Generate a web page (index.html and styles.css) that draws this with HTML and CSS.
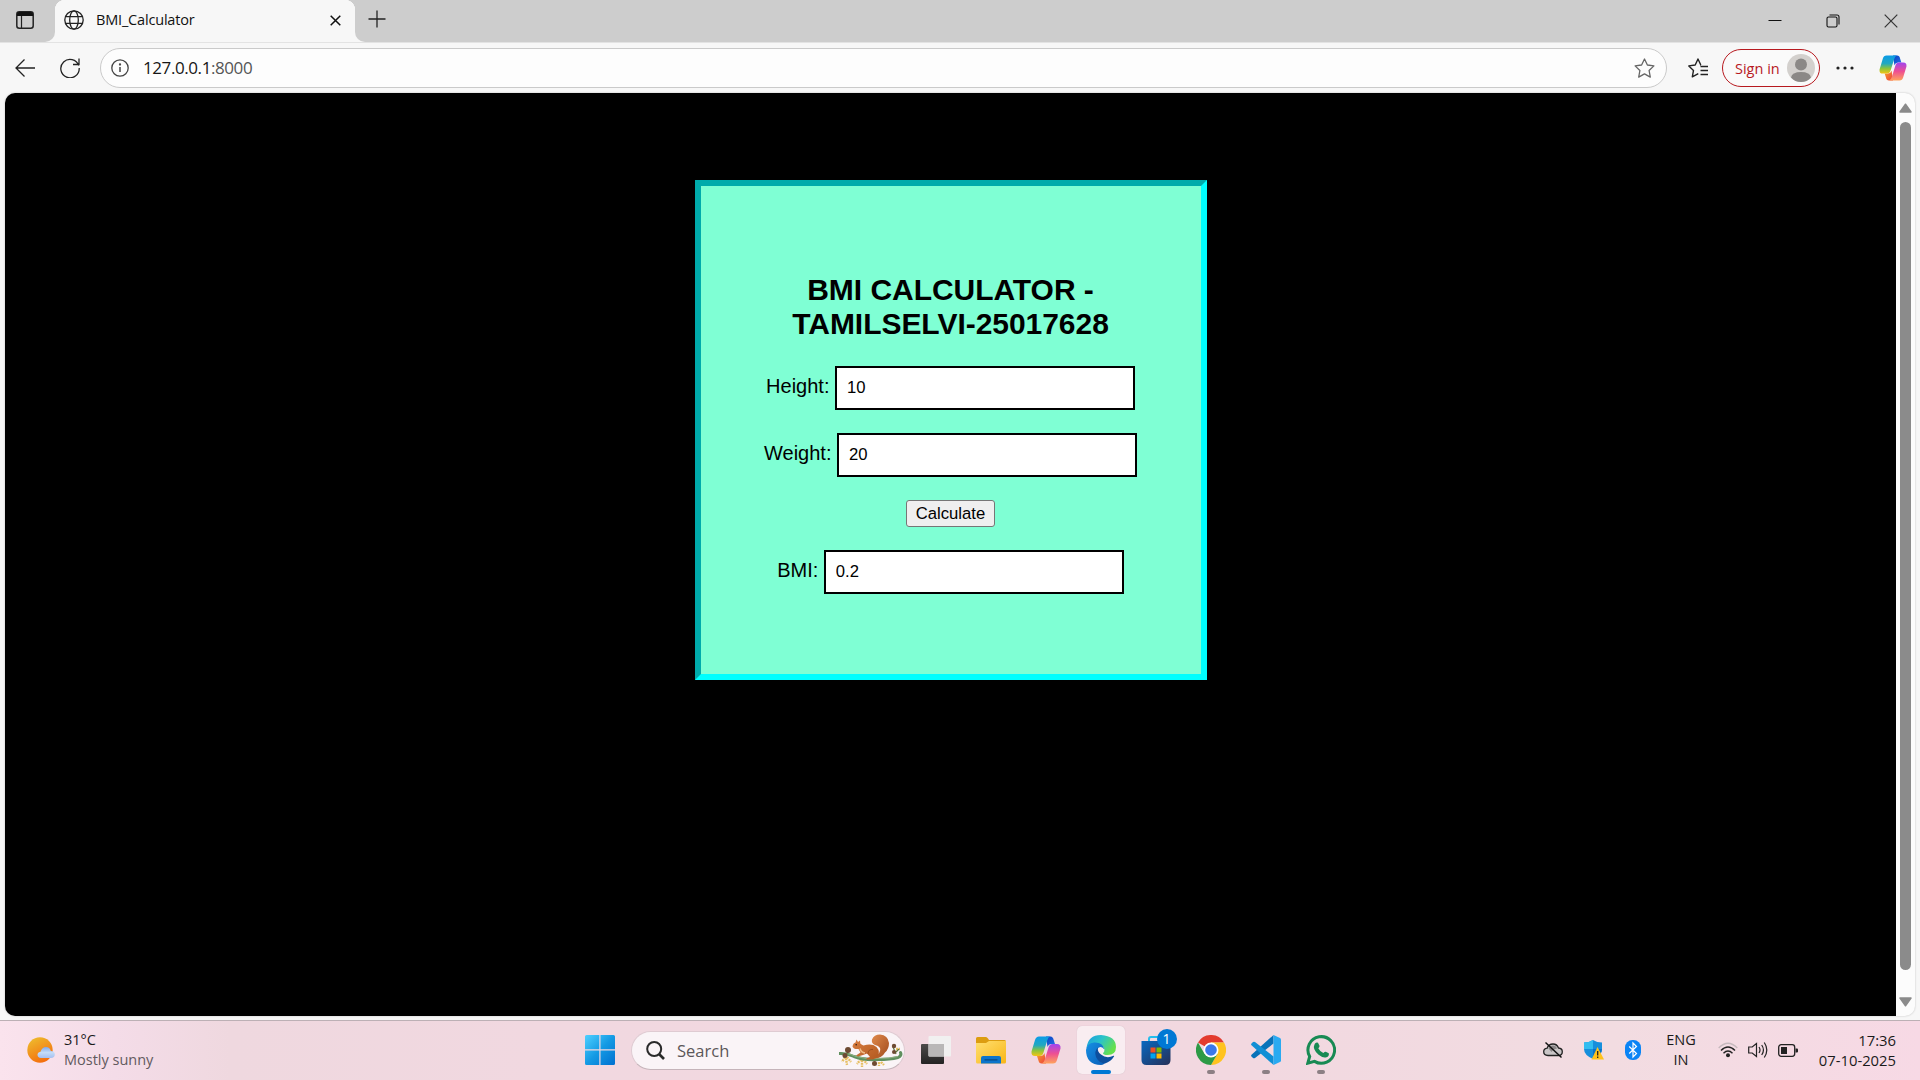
FILE: index.html
```html
<!DOCTYPE html>
<html lang="en">
<head>
<meta charset="utf-8">
<title>BMI_Calculator</title>
<link rel="stylesheet" href="styles.css">
</head>
<body>
<svg class="defs" width="0" height="0" aria-hidden="true">
  <defs>
    <linearGradient id="cpBlue" x1="0" y1="0" x2="0" y2="1"><stop offset="0" stop-color="#0a9be8"/><stop offset=".45" stop-color="#22a8c0"/><stop offset=".72" stop-color="#8cc43c"/><stop offset="1" stop-color="#f4c414"/></linearGradient>
    <linearGradient id="cpPink" x1="0" y1="0" x2="0" y2="1"><stop offset="0" stop-color="#a044f0"/><stop offset=".5" stop-color="#ee4f92"/><stop offset="1" stop-color="#ffa35c"/></linearGradient>
    <linearGradient id="cpNavy" x1="0" y1="0" x2="1" y2="1"><stop offset="0" stop-color="#0a3fc0"/><stop offset="1" stop-color="#2374ea"/></linearGradient>
    <linearGradient id="cpRed" x1="0" y1="0" x2="1" y2="1"><stop offset="0" stop-color="#f8a02c"/><stop offset="1" stop-color="#ec3f3c"/></linearGradient>
    <linearGradient id="win" x1="0" y1="0" x2="1" y2="1"><stop offset="0" stop-color="#4fd0ff"/><stop offset=".5" stop-color="#149ae4"/><stop offset="1" stop-color="#0070d0"/></linearGradient>
    <linearGradient id="sun" x1=".2" y1="0" x2=".7" y2="1"><stop offset="0" stop-color="#eebb2d"/><stop offset="1" stop-color="#f46a0c"/></linearGradient>
    <linearGradient id="cloud" x1="0" y1="0" x2="0" y2="1"><stop offset="0" stop-color="#7fa8ea"/><stop offset=".5" stop-color="#c3dcf8"/><stop offset="1" stop-color="#a5bff0"/></linearGradient>
    <linearGradient id="folder" x1="0" y1="0" x2="1" y2="1"><stop offset="0" stop-color="#ffdf70"/><stop offset="1" stop-color="#f8b617"/></linearGradient>
    <linearGradient id="edgeTop" x1="0" y1="0" x2="1" y2=".5"><stop offset="0" stop-color="#1b9be0"/><stop offset=".5" stop-color="#2bc3c9"/><stop offset="1" stop-color="#66e04c"/></linearGradient>
    <linearGradient id="edgeLow" x1="0" y1="0" x2="1" y2="1"><stop offset="0" stop-color="#1690e4"/><stop offset="1" stop-color="#0a5eb8"/></linearGradient>
    <linearGradient id="store" x1="0" y1="0" x2="1" y2="1"><stop offset="0" stop-color="#0868c0"/><stop offset="1" stop-color="#273058"/></linearGradient>
    <linearGradient id="dark" x1="0" y1="0" x2="0" y2="1"><stop offset="0" stop-color="#4c4a49"/><stop offset="1" stop-color="#242323"/></linearGradient>
    <linearGradient id="tail" x1="0" y1="0" x2="1" y2="1"><stop offset="0" stop-color="#e08a4c"/><stop offset="1" stop-color="#a04a1c"/></linearGradient>
    <linearGradient id="fur" x1="0" y1="0" x2="1" y2="1"><stop offset="0" stop-color="#d87c40"/><stop offset="1" stop-color="#b35a20"/></linearGradient>
    <symbol id="copilot" viewBox="0 0 30 28">
      <path d="M15 .5h4.500Q22 .5 22.700 4L24 8h-3.500q-3 0-4 3Z" fill="url(#cpNavy)"/>
      <path d="M15 27.500h-4.500Q8 27.500 7.300 24L6 20h3.500q3 0 4-3Z" fill="url(#cpRed)"/>
      <path d="M8 .5h11.200q-2 .5-3 4L12.500 16.500q-1 3.500-4 3.500H4Q0 20 .5 15.500L4 4Q5 .5 8 .500Z" fill="url(#cpBlue)"/>
      <path d="M22 27.500H10.800q2-.5 3-4L17.500 11.500q1-3.500 4-3.500H26q4 0 3.500 4.500L26 24q-1 3.500-4 3.500Z" fill="url(#cpPink)"/>
    </symbol>
  </defs>
</svg>

<div class="screen">
  <header class="tabstrip">
    <div class="tab-actions">
      <svg width="18" height="18" viewBox="0 0 18 18"><rect x=".8" y=".8" width="16.400" height="16.400" rx="2.500" fill="none" stroke="#222" stroke-width="1.500"/><path d="M1 5V3q0-2 2-2h12q2 0 2 2v2Z" fill="#111"/><path d="M5.500 5v12" stroke="#222" stroke-width="1.200"/></svg>
    </div>
    <div class="tab">
      <svg class="globe" width="20" height="20" viewBox="0 0 20 20" fill="none" stroke="#222" stroke-width="1.300"><circle cx="10" cy="10" r="9.200"/><ellipse cx="10" cy="10" rx="4.300" ry="9.200"/><path d="M1.700 6.700h16.600M1.700 13.300h16.600"/></svg>
      <span class="tab-title">BMI_Calculator</span>
      <svg class="tab-close" width="11" height="11" viewBox="0 0 11 11" stroke="#111" stroke-width="1.500"><path d="M.7.700l9.600 9.600M10.300.700L.7 10.300"/></svg>
    </div>
    <svg class="new-tab" width="18" height="18" viewBox="0 0 18 18" stroke="#222" stroke-width="1.300"><path d="M9 .500v17M.500 9h17"/></svg>
    <div class="window-buttons">
      <svg width="14" height="14" viewBox="0 0 14 14" stroke="#111"><path d="M.500 6.500h13"/></svg>
      <svg width="14" height="14" viewBox="0 0 14 14" fill="none" stroke="#111" stroke-width="1.100"><rect x="1" y="3" width="10" height="10" rx="1.500"/><path d="M3.500 1H11q2 0 2 2v7.500"/></svg>
      <svg width="14" height="14" viewBox="0 0 14 14" stroke="#333" stroke-width="1.200"><path d="M.700.700l12.600 12.600M13.300.700L.700 13.300"/></svg>
    </div>
  </header>

  <nav class="toolbar">
    <svg class="back" width="20" height="18" viewBox="0 0 20 18" fill="none" stroke="#222" stroke-width="1.300"><path d="M20 9H1M9.500.500L1 9l8.500 8.500"/></svg>
    <svg class="reload" width="20" height="20" viewBox="0 0 20 20" fill="none" stroke="#222" stroke-width="1.300"><path d="M18.700 7.500A9.200 9.200 0 1 0 19.200 10M19 .500v6h-6"/></svg>
    <div class="address">
      <svg class="info" width="18" height="18" viewBox="0 0 18 18" fill="none" stroke="#444" stroke-width="1.300"><circle cx="9" cy="9" r="8.200"/><path d="M9 8v5" stroke-width="1.500"/><circle cx="9" cy="5.500" r=".5"/></svg>
      <span class="url"><b>127.0.0.1</b>:8000</span>
      <svg class="star" width="21" height="20" viewBox="0 0 21 20" fill="none" stroke="#666" stroke-width="1.300" stroke-linejoin="round"><path d="M10.500 1l2.900 6 6.500.900-4.800 4.600 1.200 6.600-5.800-3.200-5.800 3.200 1.200-6.600L1.100 7.900 7.600 7Z"/></svg>
    </div>
    <svg class="favorites" width="21" height="20" viewBox="0 0 21 20" fill="none" stroke="#222" stroke-width="1.400" stroke-linejoin="round"><path d="M13 7h-.2L10 1 7.200 7l-6.400.9 4.700 4.500-1.200 6.500 6-3.300M12.500 8.500H20M12.500 12.500H20M12.500 16.500H20"/></svg>
    <div class="signin"><span>Sign in</span>
      <svg width="28" height="28" viewBox="0 0 28 28"><circle cx="14" cy="14" r="14" fill="#d3d0cd"/><circle cx="14" cy="10.500" r="6" fill="#8b8886"/><path d="M4 23.500Q5 18 14 18t10 5.500Q20 28 14 28T4 23.500Z" fill="#8b8886"/></svg>
    </div>
    <svg class="more" width="18" height="4" viewBox="0 0 18 4" fill="#222"><circle cx="2" cy="2" r="1.600"/><circle cx="9" cy="2" r="1.600"/><circle cx="16" cy="2" r="1.600"/></svg>
    <svg class="copilot-button" width="28" height="26"><use href="#copilot"/></svg>
  </nav>

  <div class="viewport">
    <main class="page">
      <form class="card">
        <h1>BMI CALCULATOR -<br>TAMILSELVI-25017628</h1>
        <div class="field"><label for="height">Height:</label><input id="height" type="text" value="10"></div>
        <div class="field"><label for="weight">Weight:</label><input id="weight" type="text" value="20"></div>
        <button type="button">Calculate</button>
        <div class="field"><label for="bmi">BMI:</label><input id="bmi" type="text" value="0.2"></div>
      </form>
    </main>
    <div class="scrollbar">
      <svg width="13" height="10" viewBox="0 0 13 10"><path d="M6.500 1.200L12 9H1Z" fill="#8b8b8b" stroke="#8b8b8b" stroke-width="1.500" stroke-linejoin="round"/></svg>
      <div class="thumb"></div>
      <svg width="13" height="10" viewBox="0 0 13 10"><path d="M6.500 8.800L12 1H1Z" fill="#8b8b8b" stroke="#8b8b8b" stroke-width="1.500" stroke-linejoin="round"/></svg>
    </div>
  </div>

  <footer class="taskbar">
    <div class="weather">
      <svg width="28" height="26" viewBox="0 0 28 26"><circle cx="13" cy="13" r="12.700" fill="url(#sun)"/><path d="M14 21q-3.500-.3-3.500-3.200 0-2.500 3-3 1.500-4.800 5.500-4.800 3.800 0 4.800 4 4 .2 4 3.600 0 3.400-4 3.400Z" fill="url(#cloud)"/></svg>
      <div class="weather-text"><div>31°C</div><div class="dim">Mostly sunny</div></div>
    </div>
    <svg class="start" width="30" height="30" viewBox="0 0 30 30" fill="url(#win)"><path d="M1.500 0H14.300V14.300H0V1.500Q0 0 1.500 0ZM15.500 0h13Q30 0 30 1.500V14.300H15.500ZM0 15.500H14.300V30H1.500Q0 30 0 28.500ZM15.500 15.500H30v13q0 1.500-1.500 1.500h-13Z"/></svg>
    <div class="search">
      <svg class="lens" width="19" height="19" viewBox="0 0 19 19" fill="none" stroke="#2a2a2a" stroke-width="2"><circle cx="8.200" cy="8" r="7"/><path d="M13 13l5 5" stroke-width="2.600"/></svg>
      <span>Search</span>
      <svg class="squirrel" width="64" height="34" viewBox="0 0 64 34">
        <path d="M6 23l-3 5M7 24l1 7M8 23l4 5M22 25l-4 5M23 26l0 7M24 25l4 5M40 28l0 4M42 28l3 3M57 15l4 0" stroke="#e6bf63" stroke-width="2.400" stroke-dasharray="2 .8" fill="none"/>
        <path d="M0 19.500q8-.5 15 3 11 4 24 3 12 0 20-2 4-2 2.500-5" fill="none" stroke="#5f8f5e" stroke-width="3" stroke-linecap="round"/>
        <path d="M6 19.500q6 .5 11 3 10 3 22 2 12 0 20-2" fill="none" stroke="#9bb98c" stroke-width=".8"/>
        <path d="M7 22l2-5M57 20l-3-7M56 19l4-4" stroke="#5d783e" stroke-width="1.200" fill="none"/>
        <path d="M34 23Q43 19 41 14 39.500 11.500 36 11 32 9 33 5.500 35 .5 41 .5 49 1 50 9 50 15 46 18.500 43 24 36 24.500Z" fill="url(#tail)"/>
        <path d="M13.500 12.500Q14 9 16.500 8.500L17.500 5.500 19 8l2-1.500.3 3Q23 11 24.500 11.500 33 9 37.500 13q4.500 5 .5 10.500L34 25.500H27l1-1.500 3-1-3-3.500-4 1.500-5 1.500-2-1 4.500-3-2-3.500Q14.500 15.500 13.500 12.500Z" fill="url(#fur)"/>
        <path d="M21 14.500q1 4 5 4.500" stroke="#efba86" stroke-width="1.500" fill="none"/><circle cx="17.200" cy="10.700" r=".8" fill="#2f1b12"/>
        <path d="M29 20q0-5 5-4.500" stroke="#964719" stroke-width=".8" fill="none"/>
        <g fill="#6d4a32"><circle cx="9" cy="16" r="3"/><circle cx="6" cy="21.500" r="2.500"/><circle cx="35.500" cy="29.500" r="2.500"/><circle cx="55" cy="12" r="2.200"/><circle cx="55" cy="18" r="2"/></g>
      </svg>
    </div>
    <div class="apps">
      <div class="app"><svg width="30" height="30" viewBox="0 0 30 30"><rect x="0" y="9" width="23" height="20" rx="1" fill="url(#dark)"/><rect x="7.500" y="1" width="22.500" height="20.500" rx="1" fill="#f1f0f0"/><path d="M7.500 9H23v12.500H8.500q-1 0-1-1Z" fill="#b9b7b7"/></svg></div>
      <div class="app"><svg width="30" height="30" viewBox="0 0 30 30"><path d="M0 9V3.500Q0 2 1.500 2H10q1 0 2 1.500L13 5h15.500Q30 5 30 6.500V12H0Z" fill="#dc9d10"/><path d="M0 8h10l3-2h17v21q0 1.500-1.500 1.500h-27Q0 28.500 0 27Z" fill="url(#folder)"/><path d="M5 28.500V23q0-2 2-2h16q2 0 2 2v5.500Z" fill="#0d75cb"/><path d="M9 24.800h12" stroke="#094a83" stroke-width="1.300" stroke-linecap="round"/></svg></div>
      <div class="app"><svg width="30" height="28"><use href="#copilot"/></svg></div>
      <div class="app active"><svg width="30" height="30" viewBox="0 0 30 30"><path d="M.500 13Q2 0 15 0q15 1 15 12 0 8-8.500 8-4.500 0-4.500-2 1.500-1 1.500-3.500Q17 8.500 10 8.500 3 8.500.500 13Z" fill="url(#edgeTop)"/><path d="M0 15Q1 8 8 7.500q9-.5 10.500 7Q13.500 9.500 11 15q-1 11 8 13.500Q16 30 15 30 0 29.500 0 15Z" fill="url(#edgeLow)"/><path d="M12 12.500Q8 16 10 22q3 6 9 6.500 6-2 9-7 .500-1-.500-.7-7 3.200-12.500-1.300-4-3-3-7Z" fill="#0d4f9e"/></svg><i class="mark"></i></div>
      <div class="app"><svg width="30" height="30" viewBox="0 0 30 30"><path d="M8 7V4q0-2 2-2h10q2 0 2 2v3" fill="none" stroke="#25bdec" stroke-width="2"/><path d="M.500 6h29v19q0 5-5 5h-19q-5 0-5-5Z" fill="url(#store)"/><path d="M9.500 12.500h5v5h-5Z" fill="#f25022"/><path d="M15.500 12.500h5v5h-5Z" fill="#7fba00"/><path d="M9.500 18.500h5v5h-5Z" fill="#00a4ef"/><path d="M15.500 18.500h5v5h-5Z" fill="#ffb900"/></svg><span class="badge">1</span></div>
      <div class="app"><svg width="30" height="30" viewBox="0 0 30 30"><path d="M15 15L2 7.500A15 15 0 0 1 28 7.500H15Z" fill="#e33b2e"/><path d="M15 7.500h13A15 15 0 0 1 15 30l6.500-11.500Z" fill="#ffc31f"/><path d="M2 7.500A15 15 0 0 0 15 30l6.500-11.300L15 15 8.500 18.700Z" fill="#2d9a46"/><circle cx="15" cy="15" r="7.500" fill="#fff"/><circle cx="15" cy="15" r="5.800" fill="#3b78ea"/></svg><i class="mark idle"></i></div>
      <div class="app"><svg width="30" height="30" viewBox="0 0 30 30"><path d="M22.500 0v8.500L4 23q-1 .7-2 0L.500 21.500q-.8-1 0-1.800Z" fill="#0872b9"/><path d="M22.500 30v-8.500L4 7Q3 6.300 2 7L.500 8.500q-.8 1 0 1.800Z" fill="#118fd5"/><path d="M22.500 0L29 3q1 .5 1 1.500v21q0 1-1 1.500l-6.500 3Z" fill="#2aaaf1"/></svg><i class="mark idle"></i></div>
      <div class="app"><svg width="30" height="30" viewBox="0 0 30 30"><path d="M1.800 28.200l1.900-6.700A13.300 13.300 0 1 1 8.500 26.400Z" fill="none" stroke="#188a53" stroke-width="3"/><path d="M10 7.800q1-.8 2 0l1.500 3q.3 1-1.200 2.500 1.700 3.400 5 4.800 1.700-1.700 2.500-1.400l3 1.500q.8 3.500-3.200 4.300-3 .5-7.300-3-6-5.700-4-9.500Q8.800 8.400 10 7.800Z" fill="#188a53"/></svg><i class="mark idle"></i></div>
    </div>
    <div class="tray">
      <svg class="onedrive" width="20" height="18" viewBox="0 0 20 18"><path d="M5 14.500q-4.300 0-4.300-3.700 0-3.300 3.500-3.700Q5.500 3 10 3q4 0 5.500 4 3.800.3 3.800 3.700 0 3.800-4 3.800Z" fill="#c9c5c6" stroke="#222" stroke-width="1.300"/><path d="M5.500 7.500Q7 4.500 10 4.500q3 0 4 3Q10 8 8.500 11Z" fill="#8a8687"/><path d="M2.500 1.500l16 15" stroke="#111" stroke-width="1.500"/></svg>
      <svg class="shield" width="20" height="20" viewBox="0 0 20 20"><path d="M9 0Q13 2.500 18 2.500V9q0 6-9 10Q0 15 0 9V2.500Q5 2.500 9 0Z" fill="#168fdc"/><path d="M9 0v9H0V2.500Q5 2.500 9 0Z" fill="#31bdf0"/><path d="M9 9h9q0 6-9 10Z" fill="#0874ca"/><path d="M13.500 7L20 19.500H7.500Z" fill="#ffc21b"/><path d="M13.700 11v4.500M13.700 16.500v1.500" stroke="#222" stroke-width="1.300"/></svg>
      <svg class="bluetooth" width="16" height="20" viewBox="0 0 16 20"><rect width="16" height="20" rx="7.500" fill="#0a84f5"/><path d="M4.200 6.500l7.300 7L8 17V3l3.500 3.500-7.300 7" fill="none" stroke="#fff" stroke-width="1.200"/></svg>
      <div class="language">ENG<br>IN</div>
      <svg class="wifi" width="20" height="16" viewBox="0 0 20 16" fill="none" stroke-width="1.400"><path d="M.700 6q9.300-9.500 18.600 0" stroke="#c6b9bd"/><path d="M3 8.500q7-7 14 0M5.500 11.200q4.500-4.500 9 0" stroke="#222"/><circle cx="10" cy="13.200" r="2" fill="#222"/></svg>
      <svg class="speaker" width="20" height="18" viewBox="0 0 20 18" fill="none" stroke="#222" stroke-width="1.200"><path d="M.700 6h3.500L8.500 2.500v13L4.200 12H.700ZM11 6q2 3 0 6M13.700 4q3.500 5 0 10M16.300 1.500q5 7.500 0 15"/></svg>
      <svg class="battery" width="20" height="13" viewBox="0 0 20 13"><rect x=".7" y=".7" width="16" height="11.600" rx="2.500" fill="none" stroke="#222" stroke-width="1.300"/><rect x="3" y="3" width="6" height="7" fill="#222"/><path d="M17.500 4.500H19q1 0 1 1v2q0 1-1 1h-1.500Z" fill="#222"/></svg>
      <div class="clock"><div>17:36</div><div>07-10-2025</div></div>
    </div>
  </footer>
</div>
</body>
</html>
```
FILE: styles.css
```css
* { box-sizing: border-box; }
body { margin: 0; overflow: hidden; background: #f7f7f7; font-family: "Open Sans", "Noto Sans", sans-serif; color: #1a1a1a; }
svg { display: block; flex: none; }
.defs { position: absolute; }
.screen { width: 1920px; height: 1080px; display: flex; flex-direction: column; }

.tabstrip { height: 42px; flex: none; display: flex; background: #f7f7f7; }
.tab-actions { width: 55px; background: #cdcdcd; border-radius: 0 0 10px 0; padding: 11px 0 0 16px; }
.tab { width: 300px; display: flex; align-items: flex-start; padding: 10px 14px 0 9px; background: radial-gradient(circle at 10px 10px, #f7f7f7 10px, #cdcdcd 10.500px) 0 0 / 10px 10px no-repeat, radial-gradient(circle at 0 10px, #f7f7f7 10px, #cdcdcd 10.500px) 100% 0 / 10px 10px no-repeat, #f7f7f7; }
.tab-title { margin: 0 auto 0 12px; font-size: 14.500px; line-height: 20px; letter-spacing: -.18px; color: #111; white-space: nowrap; }
.tab-close { margin-top: 5px; }
.new-tab { width: 67px; height: 42px; padding: 10px 36px 14px 13px; border-radius: 0 0 0 10px; background: #cdcdcd; }
.window-buttons { flex: 1; display: flex; justify-content: flex-end; gap: 44px; padding: 14px 22px 0 0; background: #cdcdcd; }

.toolbar { height: 51px; flex: none; display: flex; align-items: center; padding: 0 13px 0 15px; border-top: 1px solid #e3e3e3; }
.reload { margin-left: 25px; }
.address { width: 1567px; height: 40px; margin-left: 20px; padding: 0 11px 0 10px; display: flex; align-items: center; background: #fdfdfd; border: 1px solid #cacaca; border-radius: 20px; }
.url { margin: 0 auto 0 14px; font-size: 17px; letter-spacing: -.42px; color: #555; line-height: 24px; }
.url b { font-weight: 400; color: #161616; }
.favorites { margin-left: 21px; }
.signin { width: 98px; height: 38px; margin-left: 13px; padding: 0 4px 0 12px; display: flex; align-items: center; justify-content: space-between; border: 1px solid #b7191f; border-radius: 19px; background: #fafafa; color: #b7191f; font-size: 14.500px; white-space: nowrap; }
.more { margin-left: 16px; }
.copilot-button { margin-left: auto; }

.viewport { height: 923px; flex: none; margin: 0 5px 4px; display: flex; border-radius: 10px; overflow: hidden; background: #fcfcfc; box-shadow: 0 0 2px #bbb; }
.page { width: 1891px; background: #000; padding-top: 87px; font-family: "Liberation Sans", Arial, sans-serif; color: #000; }
.card { width: 512px; height: 500px; margin: 0 auto; padding-top: 87px; display: flex; flex-direction: column; align-items: center; gap: 23px; background: #7fffd4; border: 6px inset #00ffff; }
.card h1 { height: 70px; margin: 0; font-size: 30px; line-height: 34px; letter-spacing: -.04px; text-align: center; white-space: nowrap; }
.field { height: 44px; display: flex; align-items: baseline; gap: 5.500px; font-size: 20px; line-height: 23px; }
.field input { width: 300px; height: 44px; padding: 2px 10px; border: 2px solid #000; border-radius: 0; background: #fff; font: 16.670px "Liberation Sans", Arial, sans-serif; color: #000; }
.card button { width: 89px; height: 27px; padding: 0; border: 1px solid #767676; border-radius: 3px; background: #efefef; font: 16.670px "Liberation Sans", Arial, sans-serif; color: #000; }
.scrollbar { width: 19px; display: flex; flex-direction: column; align-items: center; padding: 10px 0 9px; }
.scrollbar svg:last-child { margin-top: auto; }
.thumb { width: 11px; height: 848px; margin-top: 9px; border-radius: 6px; background: #8b8b8b; }

.taskbar { height: 60px; flex: none; display: flex; align-items: center; border-top: 1px solid #bcb0b5; background: linear-gradient(90deg, #fae3ed 0, #f4dce8 6%, #efd8df 12%, #f1d8e0 28%, #f2d8e0 65%, #f2dce1 84%, #f7d9e5 100%); font-size: 15px; }
.weather { width: 585px; padding: 0 0 1px 27px; display: flex; align-items: center; gap: 9px; }
.weather-text { line-height: 20px; font-size: 14.500px; padding-bottom: 1px; }
.weather-text .dim { color: #625a5e; }
.start { margin-bottom: 1px; }
.search { width: 274px; height: 39px; margin-left: 16px; padding: 0 1px 0 14px; display: flex; align-items: center; border: 1px solid #dfcbd2; border-bottom-color: #c5b4ba; border-radius: 20px; background: #faf4f7; font-size: 16.500px; color: #5c5759; }
.search span { margin: 0 auto 0 12px; }
.apps { display: flex; margin: 0 0 1px 3px; }
.app { position: relative; width: 55px; height: 48px; display: flex; align-items: center; justify-content: center; }
.app.active { width: 48px; margin: 0 3.500px; background: #f9edf1; border-radius: 5px; box-shadow: 0 0 1px #c9b8be; }
.mark { position: absolute; bottom: 0; left: 50%; width: 20px; height: 4px; margin-left: -10px; border-radius: 2px; background: #0078d4; }
.mark.idle { width: 8px; margin-left: -4px; background: #8c7f84; }
.badge { position: absolute; left: 28.500px; top: 3px; width: 20px; height: 20px; border-radius: 50%; background: #0078d4; color: #fff; font-size: 14px; line-height: 20px; text-align: center; }
.tray { margin: 0 0 1px auto; padding-right: 24px; display: flex; align-items: center; }
.shield { margin-left: 21px; }
.bluetooth { margin-left: 21px; }
.language { width: 40px; margin-left: 20px; padding-bottom: 1px; text-align: center; line-height: 20px; font-size: 14.500px; }
.wifi { margin-left: 17px; }
.speaker { margin-left: 10px; }
.battery { margin-left: 10px; }
.clock { width: 98px; padding-bottom: 1px; text-align: right; line-height: 20px; font-size: 14.800px; white-space: nowrap; }
```
